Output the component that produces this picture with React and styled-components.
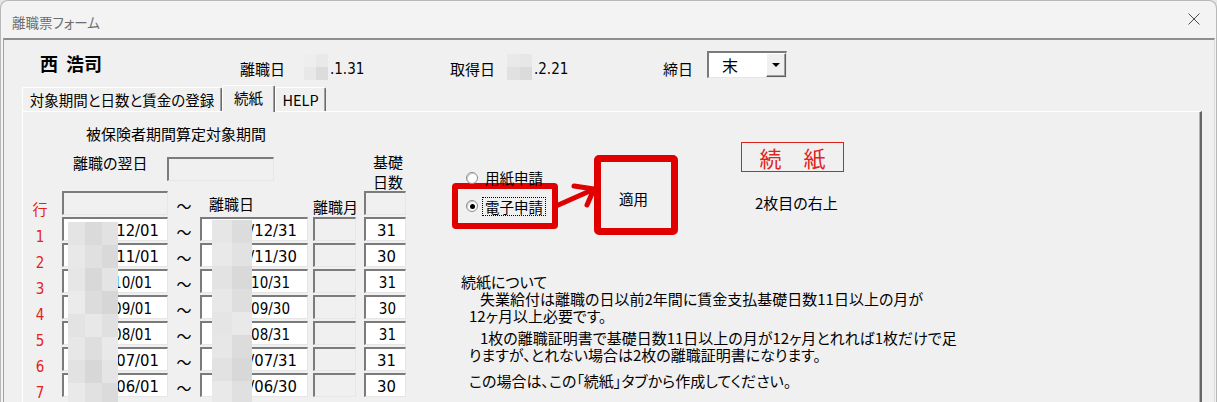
import React from "react";
import styled, { createGlobalStyle } from "styled-components";

const JP = `"Noto Sans CJK JP", "Noto Sans", sans-serif`;
const NUM = `"DejaVu Sans Condensed", "Liberation Sans", sans-serif`;
const RED = "#e00000";

const GlobalStyle = createGlobalStyle`
  html, body {
    margin: 0;
    padding: 0;
    width: 1217px;
    height: 402px;
    overflow: hidden;
    background: #e6e6e6;
  }
  body {
    font-family: ${JP};
    color: #000;
  }
  #root { width: 100%; height: 100%; }
`;

/* ---------- window chrome ---------- */

const Window = styled.div`
  width: 1217px;
  height: 402px;
  box-sizing: border-box;
  background: #f3f3f3;
  border: 1px solid #b8b8b8;
  border-bottom: none;
  border-radius: 8px 8px 0 0;
  display: flex;
  flex-direction: column;
  overflow: hidden;
`;

const TitleBar = styled.div`
  flex: none;
  height: 37px;
  box-sizing: border-box;
  padding: 12px 16px 0 11px;
  display: flex;
  align-items: flex-start;
  justify-content: space-between;
`;

const Title = styled.span`
  font-family: ${JP};
  font-size: 13.5px;
  line-height: 18px;
  color: #6d6d6d;
  font-feature-settings: "palt";
`;

const CloseIcon = styled.svg`
  display: block;
  width: 12px;
  height: 12px;
`;

const Client = styled.div`
  flex: 1;
  margin: 0 1px 0 2px;
  background: #f0f0f0;
  border-top: 2px solid #8e8e8e;
  border-left: 1px solid #a3a3a3;
  border-right: 1px solid #dcdcdc;
  display: flex;
  flex-direction: column;
  min-height: 0;
`;

/* ---------- header ---------- */

const HeaderRow = styled.div`
  flex: none;
  height: 45px;
  padding-left: 36px;
  display: flex;
  align-items: center;
`;

const PersonName = styled.div`
  width: 200px;
  font-family: ${JP};
  font-size: 18px;
  font-weight: 700;
  line-height: 24px;
  word-spacing: 4px;
`;

const FieldGroup = styled.div`
  width: ${(p) => p.$w}px;
  padding-top: 13px;
  display: flex;
  align-items: center;
`;

const HeadLabel = styled.span`
  width: ${(p) => p.$w}px;
  font-family: ${JP};
  font-size: 15px;
  line-height: 20px;
`;

const BlurBox = styled.div`
  width: ${(p) => p.$w}px;
  height: 26px;
  margin-top: -4px;
  display: grid;
  grid-template-columns: 1fr 1fr;
  grid-template-rows: 1fr 1fr;
`;

const BlurCell = styled.div`
  background: ${(p) => p.$c};
`;

const HeadValue = styled.span`
  margin-left: 2px;
  font-family: ${NUM};
  font-size: 15px;
  line-height: 20px;
`;

const Combo = styled.div`
  width: 80px;
  height: 27px;
  margin-top: 4px;
  box-sizing: border-box;
  background: #fff;
  border-style: solid;
  border-width: 2px 1px 1px 2px;
  border-color: #7b7b7b #e6e6e6 #e6e6e6 #7b7b7b;
  display: flex;
  align-items: stretch;
  justify-content: space-between;
`;

const ComboText = styled.span`
  padding-left: 13px;
  font-family: ${JP};
  font-size: 16px;
  line-height: 24px;
`;

const DropButton = styled.div`
  width: 20px;
  box-sizing: border-box;
  background: #f0f0f0;
  border: 1px solid;
  border-color: #ffffff #5f5f5f #5f5f5f #ffffff;
  box-shadow: inset -1px -1px 0 #a0a0a0;
  display: flex;
  align-items: center;
  justify-content: center;
`;

/* ---------- tabs ---------- */

const TabStrip = styled.div`
  flex: none;
  height: 26px;
  padding-left: 18px;
  display: flex;
  align-items: flex-end;
`;

const Tab = styled.div`
  position: relative;
  z-index: ${(p) => (p.$active ? 1 : 0)};
  width: ${(p) => p.$w}px;
  height: ${(p) => (p.$active ? 27 : 24)}px;
  margin-bottom: ${(p) => (p.$active ? -1 : 0)}px;
  box-sizing: border-box;
  padding-bottom: ${(p) => (p.$active ? 4 : 1)}px;
  background: #f0f0f0;
  border-top: 1px solid #fff;
  border-left: 1px solid #fff;
  border-right: 1px solid #6a6a6a;
  box-shadow: inset -1px 0 0 #a0a0a0;
  border-radius: 2px 2px 0 0;
  display: flex;
  align-items: center;
  justify-content: center;
  font-family: ${JP};
  font-size: 14.5px;
  font-feature-settings: "palt";
  white-space: nowrap;
`;

const TabPanel = styled.div`
  flex: 1;
  width: 1180px;
  margin-left: 18px;
  box-sizing: border-box;
  background: #f0f0f0;
  border-top: 1px solid #fff;
  border-left: 1px solid #fff;
  border-right: 2px solid #666;
  box-shadow: inset -1px 0 0 #b4b4b4;
  display: flex;
  align-items: flex-start;
`;

/* ---------- period table ---------- */

const PeriodSection = styled.div`
  flex: none;
  width: 383px;
`;

const SectionTitle = styled.div`
  margin-top: 12px;
  padding-left: 63px;
  font-family: ${JP};
  font-size: 15px;
  line-height: 20px;
`;

const NextDayRow = styled.div`
  height: 47px;
  display: flex;
  align-items: flex-start;
`;

const NextDayLabel = styled.span`
  width: 94px;
  margin-left: 50px;
  margin-top: 9px;
  font-family: ${JP};
  font-size: 15px;
  line-height: 20px;
  font-feature-settings: "palt";
`;

const BaseDaysHead = styled.div`
  margin-left: 99px;
  margin-top: 8px;
  font-family: ${JP};
  font-size: 15px;
  line-height: 20px;
`;

const Table = styled.div`
  position: relative;
`;

const Row = styled.div`
  height: 24px;
  margin-bottom: 2px;
  display: flex;
  align-items: flex-start;
`;

const RowLabel = styled.div`
  width: 39px;
  padding-right: 5px;
  box-sizing: border-box;
  padding-top: ${(p) => p.$top ?? 12}px;
  text-align: center;
  font-family: ${(p) => (p.$jp ? JP : NUM)};
  font-size: 15px;
  line-height: 16px;
  color: #e2231a;
`;

const Field = styled.div`
  flex: none;
  width: ${(p) => p.$w}px;
  height: ${(p) => p.$h ?? 24}px;
  margin-left: ${(p) => p.$ml ?? 0}px;
  margin-top: ${(p) => p.$mt ?? 0}px;
  box-sizing: border-box;
  background: ${(p) => (p.$disabled ? "#f0f0f0" : "#fff")};
  border-style: solid;
  border-width: 2px 1px 1px 2px;
  border-color: #7b7b7b #e6e6e6 #e6e6e6 #7b7b7b;
  padding-right: ${(p) => p.$pr ?? 8}px;
  padding-top: 2px;
  display: flex;
  align-items: center;
  justify-content: flex-end;
  font-family: ${NUM};
  font-size: ${(p) => (p.$small ? 15 : 16.5)}px;
  white-space: nowrap;
  overflow: hidden;
`;

const Tilde = styled.div`
  flex: none;
  width: 32px;
  padding-top: 5px;
  text-align: center;
  font-family: ${JP};
  font-size: 15px;
  line-height: 20px;
`;

const ColumnHead = styled.div`
  flex: none;
  width: ${(p) => p.$w}px;
  margin-left: ${(p) => p.$ml ?? 0}px;
  padding-left: ${(p) => p.$pl ?? 0}px;
  padding-top: ${(p) => p.$pt ?? 0}px;
  box-sizing: border-box;
  font-family: ${JP};
  font-size: 15px;
  line-height: 20px;
  white-space: nowrap;
`;

/* pixelated cover over the year part of the dates */
const Mosaic = styled.div`
  position: absolute;
  left: ${(p) => p.$left}px;
  top: ${(p) => p.$top}px;
  display: grid;
  grid-template-columns: ${(p) => p.$cols};
  grid-auto-rows: 23px;
`;

const MosaicCell = styled.div`
  background: ${(p) => p.$c};
`;

/* ---------- right hand side ---------- */

const SheetSection = styled.div`
  flex: none;
  margin-left: 46px;
`;

const TopRow = styled.div`
  display: flex;
  align-items: flex-start;
`;

const OptionStack = styled.div`
  width: 106px;
  margin-top: 57px;
`;

const Option = styled.label`
  height: 18px;
  padding-left: ${(p) => p.$pl ?? 14}px;
  display: flex;
  align-items: center;
  gap: 7px;
  font-family: ${JP};
  font-size: 14.5px;
  line-height: 18px;
`;

const RadioMark = styled.span`
  flex: none;
  width: 12px;
  height: 12px;
  box-sizing: border-box;
  border-radius: 50%;
  background: #fff;
  border: 1px solid #8a8a8a;
  box-shadow: inset 1px 1px 0 #d0d0d0;
  display: flex;
  align-items: center;
  justify-content: center;
  &::after {
    content: "";
    display: ${(p) => (p.$checked ? "block" : "none")};
    width: 5px;
    height: 5px;
    border-radius: 50%;
    background: #000;
  }
`;

const FocusText = styled.span`
  padding: 0 2px;
  margin-left: -3px;
  border: 1px dotted #000;
  line-height: 17px;
`;

const Highlight = styled.div`
  height: 46px;
  margin-top: -4px;
  box-sizing: border-box;
  border: 6px solid ${RED};
  border-radius: 4px;
  padding-left: 2px;
  display: flex;
  align-items: center;
`;

const Pointer = styled.svg`
  flex: none;
  display: block;
  width: 36px;
  height: 30px;
  margin-top: 70px;
  overflow: visible;
`;

const ApplyBox = styled.div`
  flex: none;
  width: 84px;
  height: 80px;
  margin-top: 43px;
  box-sizing: border-box;
  border: 7px solid ${RED};
  border-radius: 5px;
  padding: 6px 5px 0 0;
  display: flex;
  align-items: center;
  justify-content: center;
  font-family: ${JP};
  font-size: 14.5px;
`;

const SheetTagColumn = styled.div`
  margin-left: 63px;
  margin-top: 30px;
`;

const SheetTag = styled.div`
  width: 103px;
  height: 30px;
  box-sizing: border-box;
  border: 1px solid #d8201c;
  display: flex;
  align-items: center;
  justify-content: center;
  font-family: ${JP};
  font-size: 22px;
  line-height: 28px;
  color: #e2231a;
`;

const Caption = styled.div`
  margin-top: 21px;
  padding-left: 14px;
  font-family: ${JP};
  font-size: 15px;
  line-height: 20px;
  font-feature-settings: "palt";
`;

const Notes = styled.div`
  margin-top: 38px;
  padding-left: 9px;
  font-family: ${JP};
  font-size: 15px;
  font-feature-settings: "palt";
`;

const NoteLine = styled.div`
  margin-top: ${(p) => p.$gap ?? 0}px;
  padding-left: ${(p) => p.$indent ?? 0}px;
  line-height: 17px;
  white-space: nowrap;
`;

/* ---------- data ---------- */

const ROWS = [
  { n: 1, from: "12/01", to: "/12/31", days: 31 },
  { n: 2, from: "11/01", to: "/11/30", days: 30 },
  { n: 3, from: "10/01", to: "10/31", days: 31, small: true },
  { n: 4, from: "09/01", to: "09/30", days: 30, small: true },
  { n: 5, from: "08/01", to: "08/31", days: 31, small: true },
  { n: 6, from: "07/01", to: "/07/31", days: 31 },
  { n: 7, from: "06/01", to: "/06/30", days: 30 },
];

const FROM_MOSAIC = [
  "#e4e4e4", "#dadada", "#e2e2e2",
  "#e8e8e8", "#e0e0e0", "#d9d9d9",
  "#e6e6e6", "#d8d8d8", "#e4e4e4",
  "#ebebeb", "#dcdcdc", "#d6d6d6",
  "#e3e3e3", "#e8e8e8", "#e0e0e0",
  "#e7e7e7", "#dedede", "#e9e9e9",
  "#e2e2e2", "#d7d7d7", "#e5e5e5",
  "#e9e9e9", "#e1e1e1", "#dbdbdb",
];

const TO_MOSAIC = [
  "#e6e6e6", "#dcdcdc",
  "#e9e9e9", "#e2e2e2",
  "#e3e3e3", "#d9d9d9",
  "#e8e8e8", "#dedede",
  "#e5e5e5", "#e9e9e9",
  "#e7e7e7", "#dcdcdc",
  "#e2e2e2", "#d8d8d8",
  "#e9e9e9", "#e0e0e0",
];

const NOTES = [
  { text: "続紙について", indent: 0, gap: 0 },
  { text: "失業給付は離職の日以前2年間に賃金支払基礎日数11日以上の月が", indent: 19, gap: 0 },
  { text: "12ヶ月以上必要です。", indent: 8, gap: 0 },
  { text: "1枚の離職証明書で基礎日数11日以上の月が12ヶ月とれれば1枚だけで足", indent: 19, gap: 5 },
  { text: "りますが、とれない場合は2枚の離職証明書になります。", indent: 8, gap: 0 },
  { text: "この場合は、この「続紙」タブから作成してください。", indent: 8, gap: 9 },
];

/* ---------- page ---------- */

export default function App() {
  return (
    <>
      <GlobalStyle />
      <Window>
        <TitleBar>
          <Title>離職票フォーム</Title>
          <CloseIcon viewBox="0 0 12 12">
            <path d="M0.5 0.5 L11.5 11.5 M11.5 0.5 L0.5 11.5" stroke="#4a4a4a" strokeWidth="1" fill="none" />
          </CloseIcon>
        </TitleBar>

        <Client>
          <HeaderRow>
            <PersonName>西 浩司</PersonName>
            <FieldGroup $w={210}>
              <HeadLabel $w={64}>離職日</HeadLabel>
              <BlurBox $w={24}>
                <BlurCell $c="#eeeeee" />
                <BlurCell $c="#e9e9e9" />
                <BlurCell $c="#e8e8e8" />
                <BlurCell $c="#dcdcdc" />
              </BlurBox>
              <HeadValue>.1.31</HeadValue>
            </FieldGroup>
            <FieldGroup $w={213}>
              <HeadLabel $w={57}>取得日</HeadLabel>
              <BlurBox $w={25}>
                <BlurCell $c="#e9e9e9" />
                <BlurCell $c="#e7e7e7" />
                <BlurCell $c="#e1e1e1" />
                <BlurCell $c="#dbdbdb" />
              </BlurBox>
              <HeadValue>.2.21</HeadValue>
            </FieldGroup>
            <FieldGroup $w={44}>
              <HeadLabel $w={44}>締日</HeadLabel>
            </FieldGroup>
            <Combo>
              <ComboText>末</ComboText>
              <DropButton>
                <svg width="8" height="4" viewBox="0 0 8 4">
                  <path d="M0 0 H8 L4 4 Z" fill="#000" />
                </svg>
              </DropButton>
            </Combo>
          </HeaderRow>

          <TabStrip>
            <Tab $w={200}>対象期間と日数と賃金の登録</Tab>
            <Tab $w={53} $active>続紙</Tab>
            <Tab $w={51}>HELP</Tab>
          </TabStrip>

          <TabPanel>
            <PeriodSection>
              <SectionTitle>被保険者期間算定対象期間</SectionTitle>
              <NextDayRow>
                <NextDayLabel>離職の翌日</NextDayLabel>
                <Field $w={107} $h={24} $mt={13} $disabled />
                <BaseDaysHead>
                  基礎
                  <br />
                  日数
                </BaseDaysHead>
              </NextDayRow>

              <Table>
                <Row>
                  <RowLabel $jp $top={10}>行</RowLabel>
                  <Field $w={106} $disabled />
                  <Tilde>～</Tilde>
                  <ColumnHead $w={108} $pl={9} $pt={3}>離職日</ColumnHead>
                  <ColumnHead $w={43} $ml={5} $pt={6}>離職月</ColumnHead>
                  <Field $w={42} $ml={8} $disabled />
                </Row>
                {ROWS.map((r) => (
                  <Row key={r.n}>
                    <RowLabel>{r.n}</RowLabel>
                    <Field $w={106} $small={r.small} $pr={r.small ? 15 : 8}>
                      {r.from}
                    </Field>
                    <Tilde>～</Tilde>
                    <Field $w={108} $small={r.small} $pr={r.small ? 17 : 10}>
                      {r.to}
                    </Field>
                    <Field $w={43} $ml={5} $disabled />
                    <Field $w={42} $ml={8} $small={r.small} $pr={9}>
                      {r.days}
                    </Field>
                  </Row>
                ))}
                <Mosaic $left={45} $top={31} $cols="17px 17px 16px">
                  {FROM_MOSAIC.map((c, i) => (
                    <MosaicCell key={i} $c={c} />
                  ))}
                </Mosaic>
                <Mosaic $left={189} $top={29} $cols="20px 20px">
                  {TO_MOSAIC.map((c, i) => (
                    <MosaicCell key={i} $c={c} />
                  ))}
                </Mosaic>
              </Table>
            </PeriodSection>

            <SheetSection>
              <TopRow>
                <OptionStack>
                  <Option>
                    <RadioMark />
                    用紙申請
                  </Option>
                  <Highlight>
                    <Option $pl={6}>
                      <RadioMark $checked />
                      <FocusText>電子申請</FocusText>
                    </Option>
                  </Highlight>
                </OptionStack>

                <Pointer viewBox="0 0 36 30">
                  <path d="M-2 24 L33 8.5" stroke={RED} strokeWidth="5" strokeLinecap="round" fill="none" />
                  <path d="M16 4 L36 7 L29 23" stroke={RED} strokeWidth="5" strokeLinecap="round" strokeLinejoin="round" fill="none" />
                </Pointer>

                <ApplyBox>適用</ApplyBox>

                <SheetTagColumn>
                  <SheetTag>続　紙</SheetTag>
                  <Caption>2枚目の右上</Caption>
                </SheetTagColumn>
              </TopRow>

              <Notes>
                {NOTES.map((l, i) => (
                  <NoteLine key={i} $indent={l.indent} $gap={l.gap}>
                    {l.text}
                  </NoteLine>
                ))}
              </Notes>
            </SheetSection>
          </TabPanel>
        </Client>
      </Window>
    </>
  );
}
